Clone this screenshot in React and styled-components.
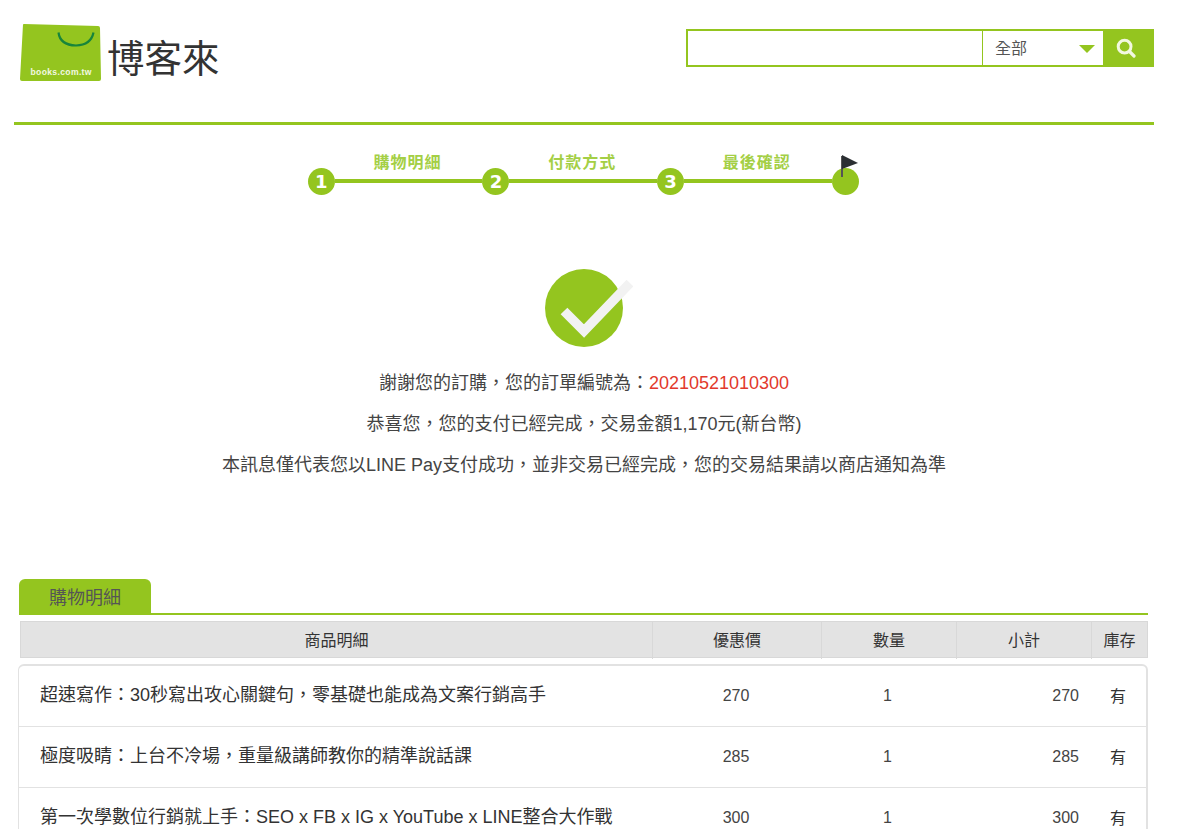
import React from "react";
import styled, { createGlobalStyle } from "styled-components";

const GREEN = "#94c51f";
const CJK = `"Liberation Sans", "Noto Sans CJK TC", sans-serif`;

const Global = createGlobalStyle`
  html, body { margin: 0; padding: 0; background: #fff; overflow: hidden; }
  body { font-family: ${CJK}; color: #333; }
  #root { height: 829px; overflow: hidden; }
`;

const Page = styled.div`
  width: 1140px;
  margin-left: 14px;
`;
const Header = styled.header`
  height: 122px;
  box-sizing: content-box;
  display: flex;
  justify-content: space-between;
  align-items: flex-start;
  border-bottom: 3px solid ${GREEN};
`;
const Logo = styled.div`
  display: flex;
  align-items: center;
  margin: 23px 0 0 6px;
  gap: 5px;
  height: 60px;
`;
const Wordmark = styled.span`
  font-family: "Noto Sans CJK TC", sans-serif;
  font-size: 37.5px;
  line-height: 60px;
  color: #333;
  margin-top: 6px;
`;
const Search = styled.form`
  display: flex;
  width: 468px;
  height: 38px;
  margin: 29px 0 0;
  box-sizing: border-box;
  border: 2px solid ${GREEN};
  border-right: 0;
`;
const SearchInput = styled.div`
  width: 294px;
  border-right: 1px solid ${GREEN};
`;
const Select = styled.div`
  width: 120px;
  display: flex;
  align-items: center;
  justify-content: space-between;
  padding: 0 8px 0 12px;
  box-sizing: border-box;
  font-size: 16px;
  color: #555;
  margin-top: -2px;
`;
const Caret = styled.i`
  width: 0;
  height: 0;
  margin-top: 4px;
  border-left: 8px solid transparent;
  border-right: 8px solid transparent;
  border-top: 8px solid ${GREEN};
`;
const SearchButton = styled.div`
  flex: 1;
  background: ${GREEN};
  display: flex;
  align-items: center;
  justify-content: center;
  margin: -2px 0;
  padding-right: 6px;
`;

const Steps = styled.ol`
  list-style: none;
  display: flex;
  margin: 0;
  padding: 28px 0 0 293.8px;
  height: 58px;
`;
const Step = styled.li`
  width: 174.6px;
  display: grid;
  grid-template-columns: 27px 1fr;
  grid-template-rows: 15px 1fr;
  align-items: center;
`;
const StepLabel = styled.span`
  grid-column: 2;
  grid-row: 1;
  text-align: center;
  font-size: 16px;
  font-weight: 700;
  letter-spacing: 1px;
  color: #a4cf45;
  white-space: nowrap;
  margin-left: -2px;
`;
const StepDot = styled.span`
  grid-column: 1;
  grid-row: 2;
  display: block;
  width: 27px;
  height: 27px;
  border-radius: 50%;
  background: ${GREEN};
  color: #fff;
  font: 700 18px/27px "DejaVu Sans", sans-serif;
  text-align: center;
  align-self: start;
`;
const StepLine = styled.span`
  grid-column: 2;
  grid-row: 2;
  height: 4px;
  background: ${GREEN};
  align-self: start;
  margin-top: 11px;
`;
const FinalStep = styled.li`
  position: relative;
  width: 27px;
  padding-top: 15px;
`;
const Flag = styled.svg`
  position: absolute;
  left: 9px;
  top: 2px;
`;

const Result = styled.section`
  display: flex;
  flex-direction: column;
  align-items: center;
  padding: 58px 0 0 0;
  height: 368px;
  box-sizing: border-box;
`;
const Check = styled.svg`
  display: block;
  margin-left: 9px;
`;
const Message = styled.p`
  margin: 0;
  font-size: 18px;
  line-height: 41px;
  color: #444;
  text-align: center;
  white-space: nowrap;
`;
const OrderNo = styled.span`
  color: #e2392c;
`;
const Messages = styled.div`
  margin-top: 14px;
`;

const Detail = styled.section`
  margin: 0 6px 0 5px;
`;
const TabBar = styled.div`
  border-bottom: 2px solid ${GREEN};
  height: 34px;
`;
const Tab = styled.div`
  width: 132px;
  height: 35px;
  box-sizing: border-box;
  background: ${GREEN};
  border-radius: 6px 6px 0 0;
  font-size: 18px;
  line-height: 39px;
  text-align: center;
  color: #555;
`;
const HeadRow = styled.div`
  display: grid;
  grid-template-columns: 631px 169px 135px 135px 1fr;
  height: 37px;
  margin: 6px 0 6px 1px;
  box-sizing: border-box;
  background: #e3e3e3;
  border: 1px solid #d8d8d8;
`;
const HeadCell = styled.div`
  font-size: 16px;
  line-height: 37px;
  text-align: center;
  color: #333;
  border-left: ${(p) => (p.$first ? "0" : "1px solid #d8d8d8")};
`;
const Card = styled.div`
  border: 1px solid #e2e2e2;
  border-top-width: 2px;
  border-right-width: 2px;
  border-radius: 6px 6px 0 0;
  margin-left: -1px;
`;
const Row = styled.div`
  display: grid;
  grid-template-columns: 633px 168px 135px 135px 1fr;
  height: 61px;
  box-sizing: border-box;
  align-items: center;
  border-bottom: 1px solid #e2e2e2;
`;
const Title = styled.div`
  font-size: 18px;
  color: #333;
  padding-left: 21px;
  margin-top: -7px;
  white-space: nowrap;
`;
const Num = styled.div`
  font-size: 16px;
  color: #444;
  text-align: ${(p) => p.$align || "center"};
  padding-right: ${(p) => (p.$align === "right" ? "11px" : "0")};
`;
const Stock = styled.div`
  font-size: 16px;
  color: #333;
  text-align: center;
  margin-top: -2px;
`;

const items = [
  ["超速寫作：30秒寫出攻心關鍵句，零基礎也能成為文案行銷高手", 270],
  ["極度吸睛：上台不冷場，重量級講師教你的精準說話課", 285],
  ["第一次學數位行銷就上手：SEO x FB x IG x YouTube x LINE整合大作戰", 300],
];

export default function App() {
  return (
    <Page>
      <Global />
      <Header>
        <Logo>
          <svg width="82" height="60" viewBox="0 0 82 60">
            <path d="M3 1.5 Q3 1 4 1 L78 3 Q80 3 80 5 L81 56 Q81 58 79 58 L2 58 Q0 58 0 56 Z" fill={GREEN} />
            <path d="M38.5 9.5 Q40 22 56 22.5 Q71 22 73.5 9.5" fill="none" stroke="#17853b" strokeWidth="2.2" />
            <text x="10.5" y="52" fill="#f3f8e2" fontSize="8.6" fontWeight="700" fontFamily="Liberation Sans, sans-serif" textLength="61">books.com.tw</text>
          </svg>
          <Wordmark>博客來</Wordmark>
        </Logo>
        <Search>
          <SearchInput />
          <Select>
            全部
            <Caret />
          </Select>
          <SearchButton>
            <svg width="20" height="20" viewBox="0 0 20 20" fill="none">
              <circle cx="8.6" cy="8.6" r="6.4" stroke="#f2f8e0" strokeWidth="3" />
              <path d="M13.5 13.5 L18 18" stroke="#f2f8e0" strokeWidth="3.2" strokeLinecap="round" />
            </svg>
          </SearchButton>
        </Search>
      </Header>

      <Steps>
        {["購物明細", "付款方式", "最後確認"].map((label, i) => (
          <Step key={label}>
            <StepLabel>{label}</StepLabel>
            <StepDot>{i + 1}</StepDot>
            <StepLine />
          </Step>
        ))}
        <FinalStep>
          <StepDot />
          <Flag width="18" height="23" viewBox="0 0 18 23">
            <path d="M1 1 L1 22" stroke="#555" strokeWidth="2" />
            <path d="M1 0 L17 8 L1 14 Z" fill="#2b2f33" />
          </Flag>
        </FinalStep>
      </Steps>

      <Result>
        <Check width="88" height="80" viewBox="0 0 88 80">
          <circle cx="39" cy="39" r="39" fill={GREEN} />
          <path d="M19 42 L39 62 L85 14" fill="none" stroke="#f2f2f2" strokeWidth="9.5" />
        </Check>
        <Messages>
          <Message>
            謝謝您的訂購，您的訂單編號為：<OrderNo>20210521010300</OrderNo>
          </Message>
          <Message>恭喜您，您的支付已經完成，交易金額1,170元(新台幣)</Message>
          <Message>本訊息僅代表您以LINE Pay支付成功，並非交易已經完成，您的交易結果請以商店通知為準</Message>
        </Messages>
      </Result>

      <Detail>
        <TabBar>
          <Tab>購物明細</Tab>
        </TabBar>
        <HeadRow>
          <HeadCell $first>商品明細</HeadCell>
          <HeadCell>優惠價</HeadCell>
          <HeadCell>數量</HeadCell>
          <HeadCell>小計</HeadCell>
          <HeadCell>庫存</HeadCell>
        </HeadRow>
        <Card>
          {items.map(([name, price]) => (
            <Row key={name}>
              <Title>{name}</Title>
              <Num>{price}</Num>
              <Num>1</Num>
              <Num $align="right">{price}</Num>
              <Stock>有</Stock>
            </Row>
          ))}
        </Card>
      </Detail>
    </Page>
  );
}
